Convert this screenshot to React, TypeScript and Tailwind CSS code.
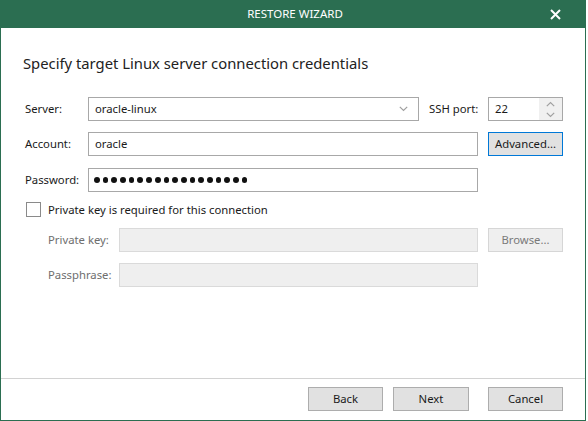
import React from "react";

const font = { fontFamily: '"Noto Sans", "Segoe UI", Arial, sans-serif' };

function Chevron({ up = false, className = "" }: { up?: boolean; className?: string }) {
  return (
    <svg width="9" height="6" viewBox="0 0 9 6" className={className}>
      <path
        d={up ? "M0.8 5.2 L4.5 1.5 L8.2 5.2" : "M0.8 0.8 L4.5 4.5 L8.2 0.8"}
        fill="none"
        stroke="#a0a0a0"
        strokeWidth="1.2"
      />
    </svg>
  );
}

export default function App() {
  return (
    <div className="w-[588px] h-[421px] bg-white text-[11.3px] text-[#1a1a1a]" style={font}>
      <div className="w-[586px] h-[421px] flex flex-col border-x border-b border-[#2b6e51]">
        {/* Title bar */}
        <div className="h-[28px] bg-[#2b6e51] flex items-center relative -mx-px">
          <div className="flex-1 text-center text-white text-[11.5px] pl-[4px]">RESTORE WIZARD</div>
          <div className="absolute right-[25px] top-[9px]">
            <svg width="11" height="11" viewBox="0 0 11 11">
              <path d="M1 1 L10 10 M10 1 L1 10" stroke="white" strokeWidth="2" />
            </svg>
          </div>
        </div>

        {/* Content */}
        <div className="flex-1 pl-[22px] pr-[22px]">
          <div className="mt-[24px] text-[14.8px] text-[#222] leading-[22px]">
            Specify target Linux server connection credentials
          </div>

          {/* Server row */}
          <div className="mt-[23px] flex items-center h-[24px]">
            <div className="w-[65px] pl-[2px]">Server:</div>
            <div className="w-[331px] h-[24px] border border-[#a8a8a8] flex items-center pl-[6px] pr-[10px]">
              <span className="flex-1">oracle-linux</span>
              <Chevron />
            </div>
            <div className="w-[69px] pl-[10px]">SSH port:</div>
            <div className="w-[75px] h-[24px] border border-[#a8a8a8] flex">
              <div className="flex-1 flex items-center pl-[6px]">22</div>
              <div className="w-[23px] bg-[#f0f0f0] flex flex-col items-center justify-center gap-[5px]">
                <Chevron up />
                <Chevron />
              </div>
            </div>
          </div>

          {/* Account row */}
          <div className="mt-[11px] flex items-center h-[24px]">
            <div className="w-[65px] pl-[2px]">Account:</div>
            <div className="w-[390px] h-[24px] border border-[#a8a8a8] flex items-center pl-[6px]">oracle</div>
            <div className="w-[10px]" />
            <div className="w-[75px] h-[24px] border border-[#0078d7] bg-[#e1e1e1] flex items-center justify-center">
              Advanced...
            </div>
          </div>

          {/* Password row */}
          <div className="mt-[12px] flex items-center h-[24px]">
            <div className="w-[65px] pl-[2px]">Password:</div>
            <div className="w-[390px] h-[24px] border border-[#a8a8a8] flex items-center pl-[5px] gap-[3px]">
              {Array.from({ length: 18 }).map((_, i) => (
                <span key={i} className="w-[5.7px] h-[5.7px] rounded-full bg-[#111]" />
              ))}
            </div>
          </div>

          {/* Checkbox */}
          <div className="mt-[10px] flex items-center h-[15px] pl-[3px]">
            <div className="w-[15px] h-[15px] border border-[#8a8a8a] bg-white" />
            <div className="pl-[7px] pt-[2px]">Private key is required for this connection</div>
          </div>

          {/* Private key */}
          <div className="mt-[11px] flex items-center h-[24px] pl-[25px]">
            <div className="w-[71px] text-[#6e6e6e]">Private key:</div>
            <div className="w-[359px] h-[24px] border border-[#dadada] bg-[#efefef]" />
            <div className="w-[10px]" />
            <div className="w-[75px] h-[24px] border border-[#d6d6d6] bg-[#efefef] flex items-center justify-center text-[#7a7a7a]">
              Browse...
            </div>
          </div>

          {/* Passphrase */}
          <div className="mt-[11px] flex items-center h-[24px] pl-[25px]">
            <div className="w-[71px] text-[#6e6e6e]">Passphrase:</div>
            <div className="w-[359px] h-[24px] border border-[#dadada] bg-[#efefef]" />
          </div>
        </div>

        {/* Footer */}
        <div className="h-[42px] border-t border-[#d2d2d2] flex justify-end items-start pt-[8px] pr-[22px]">
          <div className="w-[75px] h-[24px] border border-[#adadad] bg-[#e1e1e1] flex items-center justify-center">Back</div>
          <div className="w-[10px]" />
          <div className="w-[76px] h-[24px] border border-[#adadad] bg-[#e1e1e1] flex items-center justify-center">Next</div>
          <div className="w-[19px]" />
          <div className="w-[75px] h-[24px] border border-[#adadad] bg-[#e1e1e1] flex items-center justify-center">Cancel</div>
        </div>
      </div>
    </div>
  );
}
